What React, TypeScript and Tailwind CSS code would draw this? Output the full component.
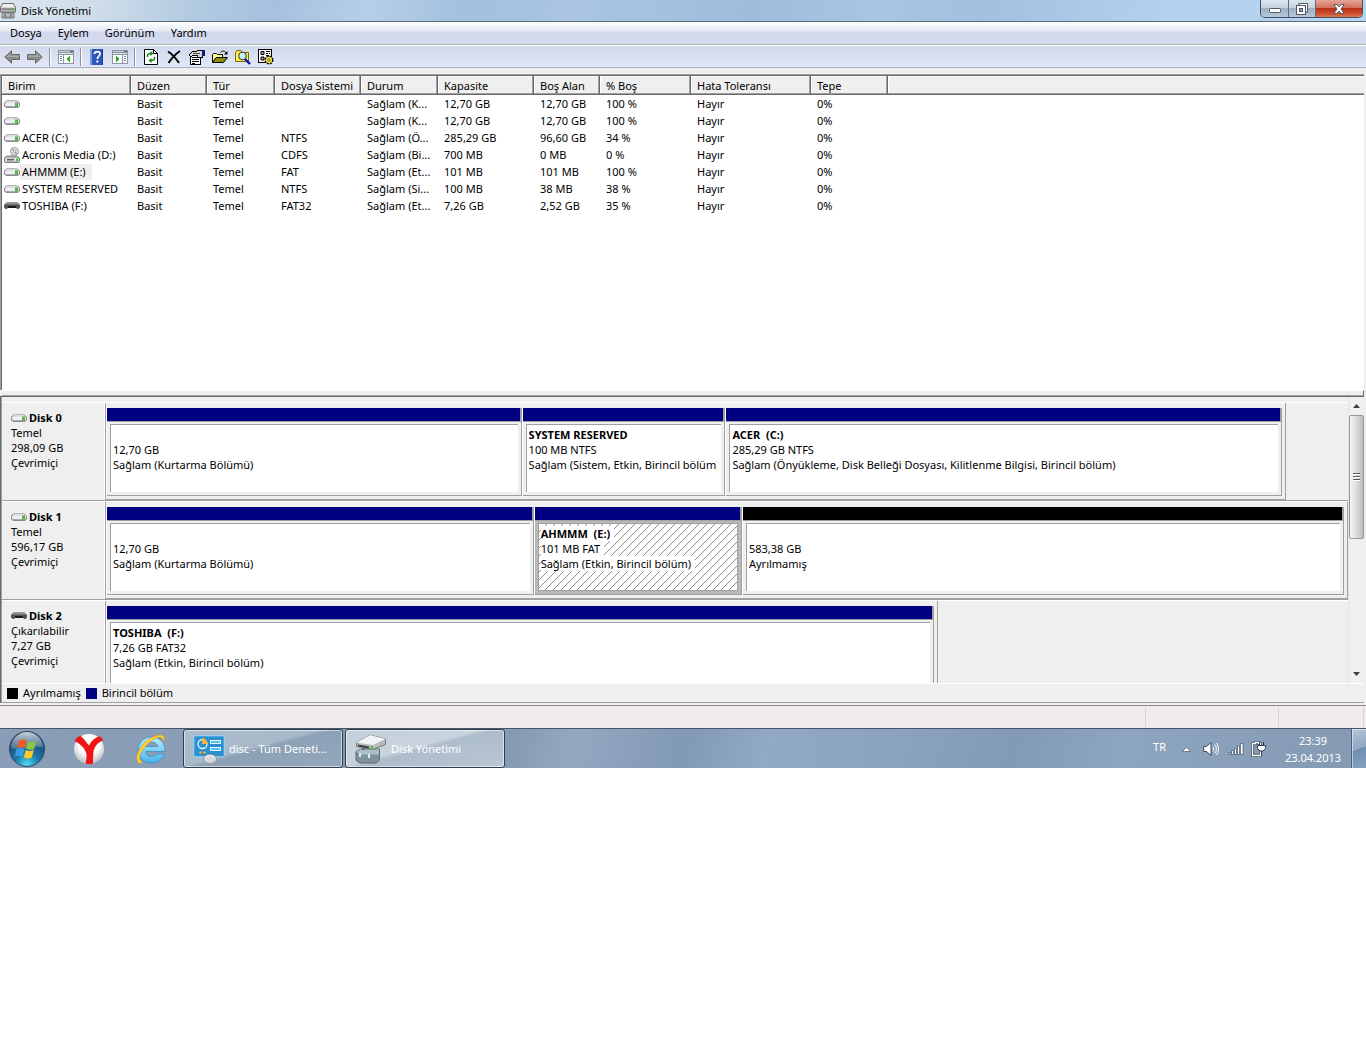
import type { ReactNode } from "react";

type Volume = {
  name: string;
  icon?: "drive" | "cd" | "usb";
  fs: string;
  status: string;
  capacity: string;
  free: string;
  percent: string;
  selected?: boolean;
};

type Partition = {
  name?: string;
  size: string;
  status: string;
  grow: string;
  unallocated?: boolean;
  selected?: boolean;
};

type Disk = {
  name: string;
  kind: string;
  size: string;
  state: string;
  width: string;
  removable?: boolean;
  partitions: Partition[];
};

const columns = [
  { label: "Birim", width: "w-[129px]" },
  { label: "Düzen", width: "w-[76px]" },
  { label: "Tür", width: "w-[68px]" },
  { label: "Dosya Sistemi", width: "w-[86px]" },
  { label: "Durum", width: "w-[77px]" },
  { label: "Kapasite", width: "w-[96px]" },
  { label: "Boş Alan", width: "w-[66px]" },
  { label: "% Boş", width: "w-[91px]" },
  { label: "Hata Toleransı", width: "w-[120px]" },
  { label: "Tepe", width: "w-[77px]" },
];

const volumes: Volume[] = [
  { name: "", fs: "", status: "Sağlam (K...", capacity: "12,70 GB", free: "12,70 GB", percent: "100 %" },
  { name: "", fs: "", status: "Sağlam (K...", capacity: "12,70 GB", free: "12,70 GB", percent: "100 %" },
  { name: "ACER (C:)", fs: "NTFS", status: "Sağlam (Ö...", capacity: "285,29 GB", free: "96,60 GB", percent: "34 %" },
  { name: "Acronis Media (D:)", icon: "cd", fs: "CDFS", status: "Sağlam (Bi...", capacity: "700 MB", free: "0 MB", percent: "0 %" },
  { name: "AHMMM (E:)", fs: "FAT", status: "Sağlam (Et...", capacity: "101 MB", free: "101 MB", percent: "100 %", selected: true },
  { name: "SYSTEM RESERVED", fs: "NTFS", status: "Sağlam (Si...", capacity: "100 MB", free: "38 MB", percent: "38 %" },
  { name: "TOSHIBA (F:)", icon: "usb", fs: "FAT32", status: "Sağlam (Et...", capacity: "7,26 GB", free: "2,52 GB", percent: "35 %" },
];

const disks: Disk[] = [
  {
    name: "Disk 0",
    kind: "Temel",
    size: "298,09 GB",
    state: "Çevrimiçi",
    width: "w-[95%]",
    partitions: [
      { size: "12,70 GB", status: "Sağlam (Kurtarma Bölümü)", grow: "grow-[415]" },
      { name: "SYSTEM RESERVED", size: "100 MB NTFS", status: "Sağlam (Sistem, Etkin, Birincil bölüm)", grow: "grow-[203]" },
      { name: "ACER  (C:)", size: "285,29 GB NTFS", status: "Sağlam (Önyükleme, Disk Belleği Dosyası, Kilitlenme Bilgisi, Birincil bölüm)", grow: "grow-[556]" },
    ],
  },
  {
    name: "Disk 1",
    kind: "Temel",
    size: "596,17 GB",
    state: "Çevrimiçi",
    width: "w-full",
    partitions: [
      { size: "12,70 GB", status: "Sağlam (Kurtarma Bölümü)", grow: "grow-[428]" },
      { name: "AHMMM  (E:)", size: "101 MB FAT", status: "Sağlam (Etkin, Birincil bölüm)", grow: "grow-[208]", selected: true },
      { size: "583,38 GB", status: "Ayrılmamış", grow: "grow-[603]", unallocated: true },
    ],
  },
  {
    name: "Disk 2",
    kind: "Çıkarılabilir",
    size: "7,27 GB",
    state: "Çevrimiçi",
    width: "w-[67%]",
    removable: true,
    partitions: [{ name: "TOSHIBA  (F:)", size: "7,26 GB FAT32", status: "Sağlam (Etkin, Birincil bölüm)", grow: "grow" }],
  },
];

function DriveIcon() {
  return (
    <svg width="16" height="10" viewBox="0 0 16 10" className="shrink-0">
      <path d="M3 1.500h10l2.500 2.500v3l-1.500 1.500H2L.5 7V4z" fill="#a9a9af" stroke="#8b8b90" />
      <path d="M3.200 1.500h9.600L14.500 4h-13z" fill="#dcdce0" />
      <rect x="1" y="3.800" width="14" height="3.200" rx="1.200" fill="#eeeef4" />
      <rect x="11" y="3.500" width="3" height="4" fill="#6f9a6c" />
      <rect x="11" y="4" width="2" height="3" fill="#35d01c" />
    </svg>
  );
}

function UsbIcon() {
  return (
    <svg width="16" height="10" viewBox="0 0 16 10" className="shrink-0">
      <path d="M2.500 1.500h11L16 4v2.500L14.500 8H13l-1-1.500H4L3 8H1.500L0 6.500V4z" fill="#535355" />
      <path d="M2.500 1.500h11l1.500 2H1z" fill="#929295" />
      <path d="M3.500 7l1-2h7l1 2z" fill="#1d1d1f" />
    </svg>
  );
}

function CdIcon() {
  return (
    <svg width="16" height="16" viewBox="0 0 16 16" className="shrink-0">
      <circle cx="10.500" cy="4.500" r="4" fill="#e0e3e5" stroke="#9a9da0" />
      <path d="M10.500 4.500L8 1.500M10.500 4.500l2.500 3" stroke="#7fb58c" strokeWidth="1.300" />
      <circle cx="10.500" cy="4.500" r="1.200" fill="#fff" stroke="#777" strokeWidth=".6" />
      <path d="M2.500 9h10l3 2v3.500a1 1 0 0 1-1 1h-13a1 1 0 0 1-1-1V11z" fill="#b9b9bd" stroke="#808084" />
      <rect x="1.500" y="11.500" width="13" height="2.500" fill="#ececf0" />
      <rect x="3" y="12" width="7" height="1.500" fill="#5f5f63" />
      <rect x="12" y="11.500" width="2" height="2.500" fill="#35d01c" />
    </svg>
  );
}

function AppIcon() {
  return (
    <svg width="16" height="16" viewBox="0 0 16 16" className="shrink-0">
      <path d="M2.500.5h11l2 4v4.500H.5V4.500z" fill="#d2d2d4" stroke="#6c6c6e" />
      <path d="M3 1h10l1.500 3h-13z" fill="#f0f0f1" />
      <path d="M1.500 7.500V5h13v2.500z" fill="#8e8e90" />
      <rect x="12" y="5.500" width="2" height="2" fill="#46c52e" />
      <path d="M2 9.500h12v5.500H2z" fill="#9aa0a2" stroke="#6d7476" />
      <path d="M2.500 12h11" stroke="#d3d8da" />
      <path d="M5 11v2.500M11 11v2.500" stroke="#474c4e" />
    </svg>
  );
}

function ArrowIcon({ flip }: { flip?: boolean }) {
  return (
    <svg width="16" height="16" viewBox="0 0 16 16" className={flip ? "-scale-x-100" : ""}>
      <path d="M.8 8L7.500 1.800v3.700h8v5h-8v3.700z" fill="#8d8d8d" stroke="#686868" strokeLinejoin="round" />
      <path d="M2.500 8L6.500 4.300V6.500h8V8z" fill="#a8a8a8" />
    </svg>
  );
}

function PaneIcon({ flip }: { flip?: boolean }) {
  return (
    <svg width="16" height="14" viewBox="0 0 16 14" shapeRendering="crispEdges">
      <rect width="16" height="14" fill="#8d95a3" />
      <rect x="1" y="1" width="14" height="1" fill="#c9cfda" />
      <rect x="12" y="1" width="3" height="1" fill="#5d6675" />
      <rect x="1" y="3" width="14" height="1" fill="#e2e5ec" />
      <rect x={flip ? 11 : 1} y="5" width="4" height="8" fill="#fff" />
      <rect x={flip ? 1 : 6} y="5" width="9" height="8" fill="#fff" />
      <path d={flip ? "M12 6.500h2M12 8.500h2M12 10.500h2" : "M2 6.500h2M2 8.500h2M2 10.500h2"} stroke="#6c8ac0" />
      <path d={flip ? "M4 6v6l4-3z" : "M12 6v6L8 9z"} fill="#35a52f" />
    </svg>
  );
}

function HelpIcon() {
  return (
    <svg width="13" height="16" viewBox="0 0 13 16">
      <rect width="13" height="16" fill="#2d55ba" />
      <rect width="2" height="16" fill="#7c9ae2" />
      <rect x="12" width="1" height="16" fill="#1c3987" />
      <path d="M4.500 5c0-3.200 5.500-3.200 5.500 0 0 2-2.700 2.200-2.700 5" fill="none" stroke="#fff" strokeWidth="1.700" />
      <rect x="6.300" y="11.500" width="2" height="2" fill="#fff" />
    </svg>
  );
}

function RefreshIcon() {
  return (
    <svg width="14" height="16" viewBox="0 0 14 16">
      <path d="M.5.5h9l4 4v11H.5z" fill="#fff" stroke="#000" />
      <path d="M9.500.5v4h4" fill="none" stroke="#000" />
      <path d="M3.500 8V6.500C3.500 5 5 4.500 7 4.500" fill="none" stroke="#128212" strokeWidth="1.400" />
      <path d="M6.500 2v5L9.500 4.500z" fill="#128212" />
      <path d="M10.500 8v1.500c0 1.500-1.500 2-3.500 2" fill="none" stroke="#128212" strokeWidth="1.400" />
      <path d="M7.500 9v5l-3-2.500z" fill="#128212" />
    </svg>
  );
}

function DeleteIcon() {
  return (
    <svg width="14" height="14" viewBox="0 0 14 14">
      <path d="M1 1.500C5 4 9 8.500 12 13M13 1C8.500 4 4.500 8.500 1.500 13" fill="none" stroke="#000" strokeWidth="1.900" />
    </svg>
  );
}

function PropertiesIcon() {
  return (
    <svg width="16" height="16" viewBox="0 0 16 16" shapeRendering="crispEdges">
      <rect x="1.500" y="5.500" width="10" height="10" fill="#fff" stroke="#000" />
      <path d="M3 8.500h7M3 10.500h7M3 12.500h7M3 14.500h3" stroke="#000" />
      <path d="M0 6l4-4h4l3-1h2v7h-2l-3 1V6H4L2 8z" fill="#d5d5d5" stroke="#000" />
      <path d="M4 4h7v1H4z" fill="#4a4a4a" />
      <rect x="13" y="1" width="3" height="6" fill="#15156e" />
    </svg>
  );
}

function OpenIcon() {
  return (
    <svg width="16" height="14" viewBox="0 0 16 14">
      <path d="M.5 12.500V4.500l1-1h3l1 1h5v3" fill="#ffffa0" stroke="#000" />
      <path d="M.5 12.500L4 7.500h11.500l-4 5z" fill="#8c8b16" stroke="#000" />
      <path d="M8.500 2.500c1.500-2 4-2 5.500.5" fill="none" stroke="#000" />
      <path d="M15.500 1v3.500H12z" fill="#000" />
    </svg>
  );
}

function SearchIcon() {
  return (
    <svg width="16" height="16" viewBox="0 0 16 16">
      <path d="M.5 12.500V3.500l1.500-2h4l1.500 2h6v9z" fill="#ffef3e" stroke="#6d6a12" />
      <circle cx="7.500" cy="7" r="3.800" fill="#bdf2f5" stroke="#333" />
      <path d="M5.500 7c0-1.500 1-2 2-2" fill="none" stroke="#fff" />
      <path d="M10 10l5 5" stroke="#1313a6" strokeWidth="2.400" />
    </svg>
  );
}

function SettingsIcon() {
  return (
    <svg width="16" height="16" viewBox="0 0 16 16">
      <rect x=".5" y=".5" width="13" height="13" fill="#fff" stroke="#000" />
      <path d="M3 2.500h3v3H3zM3 8h3v3H3z" fill="#9a9a9a" stroke="#000" />
      <path d="M8 2.500h4M8 4.500h2M11 4.500h1M8 6.500h3" stroke="#000" />
      <circle cx="11" cy="11" r="3.800" fill="#f4e43b" stroke="#000" strokeDasharray="2 1" strokeWidth="1.400" />
      <circle cx="11" cy="11" r="1.200" fill="#fff" stroke="#77701a" />
    </svg>
  );
}

function ToolButton({ label, children }: { label: string; children: ReactNode }) {
  return (
    <button type="button" aria-label={label} className="flex h-5 w-[23px] items-center justify-center">
      {children}
    </button>
  );
}

function Separator() {
  return <div className="mx-[3px] h-[18px] w-[2px] border-l border-[#8c8f9b] bg-white" />;
}

function TitleBar() {
  return (
    <header className="flex h-[22px] items-start justify-between border-b border-[#5b6b7c] bg-[linear-gradient(100deg,#dbe5ee_0%,#cfdde9_7%,#b3cbe1_14%,#a5c1de_20%,#b4cfe8_27%,#a3c0dd_34%,#a9c5e1_42%,#9fbddb_55%,#a8c5e1_64%,#a3c1df_72%,#b3d1ec_85%,#b7d5f0_100%)]">
      <div className="flex h-[21px] items-center gap-[5px]">
        <AppIcon />
        <h1>Disk Yönetimi</h1>
      </div>
      <div className="mr-[3px] flex h-[18px] overflow-hidden rounded-b-[5px] border border-t-0 border-[#3f5063]">
        <button type="button" aria-label="Simge durumuna küçült" className="flex w-7 items-end justify-center border-r border-[#5e6f82] bg-[linear-gradient(#dce6ef_0%,#c4d1de_45%,#9eafc0_50%,#b6c8da_100%)] pb-[4px]">
          <svg width="12" height="5" viewBox="0 0 12 5">
            <rect x=".5" y=".5" width="11" height="4" rx="1" fill="#fff" stroke="#535666" />
          </svg>
        </button>
        <button type="button" aria-label="Önceki boyut" className="flex w-[27px] items-center justify-center border-r border-[#5e6f82] bg-[linear-gradient(#dce6ef_0%,#c4d1de_45%,#9eafc0_50%,#b6c8da_100%)]">
          <svg width="12" height="12" viewBox="0 0 12 12">
            <rect x="3" y=".5" width="8.500" height="8.500" fill="#fff" stroke="#535666" />
            <rect x=".5" y="2.500" width="9" height="9" fill="#fff" stroke="#535666" />
            <rect x="3.500" y="5.500" width="3" height="3" fill="#8e9eae" stroke="#535666" />
          </svg>
        </button>
        <button type="button" aria-label="Kapat" className="flex w-[46px] items-center justify-center bg-[linear-gradient(#e6a598_0%,#d3705c_45%,#b8321a_50%,#cf4d2b_80%,#dd7a55_100%)]">
          <svg width="12" height="10" viewBox="0 0 12 10">
            <path d="M.8.5h3L6 2.800 8.200.5h3L8 5l3.200 4.500h-3L6 7.200 3.800 9.500h-3L4 5z" fill="#fff" stroke="#535666" />
          </svg>
        </button>
      </div>
    </header>
  );
}

function MenuBar() {
  return (
    <nav className="flex h-[23px] items-center border-b border-[#b1b3b9] bg-[linear-gradient(#ffffff_0px,#e5eaf5_9px,#d4daed_10px)] pl-[2px]">
      {["Dosya", "Eylem", "Görünüm", "Yardım"].map((item) => (
        <button key={item} type="button" className="px-2">
          {item}
        </button>
      ))}
    </nav>
  );
}

function Toolbar() {
  return (
    <div className="flex h-[23px] items-center border-t border-b border-t-white border-b-[#a9b0c5] bg-linear-to-b from-[#d3d9ec] to-[#e0e7f7]">
      <ToolButton label="Geri"><ArrowIcon /></ToolButton>
      <ToolButton label="İleri"><ArrowIcon flip /></ToolButton>
      <Separator />
      <ToolButton label="Konsol ağacı"><PaneIcon /></ToolButton>
      <Separator />
      <ToolButton label="Yardım"><HelpIcon /></ToolButton>
      <ToolButton label="Eylem bölmesi"><PaneIcon flip /></ToolButton>
      <Separator />
      <ToolButton label="Yenile"><RefreshIcon /></ToolButton>
      <ToolButton label="Sil"><DeleteIcon /></ToolButton>
      <ToolButton label="Özellikler"><PropertiesIcon /></ToolButton>
      <ToolButton label="Aç"><OpenIcon /></ToolButton>
      <ToolButton label="Ara"><SearchIcon /></ToolButton>
      <ToolButton label="Ayarlar"><SettingsIcon /></ToolButton>
    </div>
  );
}

function VolumeTable() {
  return (
    <div className="min-h-[314px] bg-white">
      <table className="w-full table-fixed border-collapse text-left">
        <thead>
          <tr className="h-[19px] bg-[#efefef]">
            {columns.map((col) => (
              <th
                key={col.label}
                className={`${col.width} p-0 pl-[6px] font-normal whitespace-nowrap shadow-[inset_-1px_-1px_0_#696969,inset_-2px_-2px_0_#a0a0a0,inset_1px_1px_0_#fff]`}
              >
                {col.label}
              </th>
            ))}
            <th aria-label="Boş" className="p-0 shadow-[inset_0_-1px_0_#696969,inset_0_-2px_0_#a0a0a0,inset_1px_1px_0_#fff]" />
          </tr>
        </thead>
        <tbody>
          {volumes.map((v, i) => (
            <tr key={i} className="h-[17px] whitespace-nowrap">
              <td className="p-0">
                <div className="flex h-[17px] items-center pl-[2px]">
                  {v.icon === "cd" ? <CdIcon /> : v.icon === "usb" ? <UsbIcon /> : <DriveIcon />}
                  <span className={v.selected ? "bg-[#f0eded] pr-[6px] pl-[2px]" : "pl-[2px]"}>{v.name}</span>
                </div>
              </td>
              {["Basit", "Temel", v.fs, v.status, v.capacity, v.free, v.percent, "Hayır", "0%"].map((cell, j) => (
                <td key={j} className="p-0 pl-[6px]">{cell}</td>
              ))}
              <td />
            </tr>
          ))}
        </tbody>
      </table>
    </div>
  );
}

function PartitionBox({ part }: { part: Partition }) {
  const lineBg = part.selected ? "bg-white pr-1" : "";
  return (
    <div className={`flex min-w-0 basis-0 flex-col border-l border-white ${part.grow}`}>
      <div className={`h-[13px] border-r-2 border-[#a0a0a0] ${part.unallocated ? "bg-black" : "bg-[#000080]"}`} />
      <div
        className={`flex h-[75px] border-t border-r border-b border-[#a0a0a0] ${
          part.selected ? "bg-[#b9b9b9] p-[3px] pt-[2px]" : "bg-[#efefef] px-[3px] pt-[2px] pb-[3px]"
        }`}
      >
        <div
          className={`min-w-0 flex-1 overflow-hidden border-t border-l border-[#a0a0a0] bg-white pt-[2px] pr-1 pl-[2px] leading-[15px] whitespace-pre ${
            part.selected ? "border-r border-b bg-[linear-gradient(135deg,transparent_45%,#8c8c8c_45%,#8c8c8c_55%,transparent_55%)] bg-size-[8px_8px]" : ""
          }`}
        >
          <div className="h-[15px] overflow-hidden font-bold"><span className={lineBg}>{part.name}</span></div>
          <div className="h-[15px] overflow-hidden"><span className={lineBg}>{part.size}</span></div>
          <div className="h-[15px] overflow-hidden"><span className={lineBg}>{part.status}</span></div>
        </div>
      </div>
    </div>
  );
}

function DiskRow({ disk }: { disk: Disk }) {
  return (
    <div className="flex h-[99px] shrink-0 border-t border-b border-t-white border-b-[#a0a0a0]">
      <div className="w-[103px] shrink-0 border-r border-white pt-[7px] pl-[9px] leading-[15px]">
        <div className="flex items-center gap-[2px] font-bold">
          {disk.removable ? <UsbIcon /> : <DriveIcon />}
          <span>{disk.name}</span>
        </div>
        <div>{disk.kind}</div>
        <div>{disk.size}</div>
        <div>{disk.state}</div>
      </div>
      <div className="min-w-0 flex-1">
        <div className={`flex h-[97px] border-r border-b border-l border-[#a0a0a0] pt-[5px] pr-[3px] ${disk.width}`}>
          {disk.partitions.map((part) => (
            <PartitionBox key={part.size} part={part} />
          ))}
        </div>
      </div>
    </div>
  );
}

function ScrollBar() {
  return (
    <div className="flex w-[16px] shrink-0 flex-col border-l border-[#e3e3e3] bg-[#f0f0f0]">
      <button type="button" aria-label="Yukarı kaydır" className="flex h-[18px] items-center justify-center">
        <svg width="7" height="4" viewBox="0 0 7 4"><path d="M0 4l3.500-4L7 4z" fill="#404040" /></svg>
      </button>
      <div className="flex h-[124px] flex-col items-center justify-center gap-px rounded-[2px] border border-[#979797] bg-linear-to-r from-[#f5f5f5] via-[#dcdcde] to-[#bcbcc0]">
        <i className="h-[2px] w-[7px] border-b border-white bg-[#5a5a5a]" />
        <i className="h-[2px] w-[7px] border-b border-white bg-[#5a5a5a]" />
        <i className="h-[2px] w-[7px] border-b border-white bg-[#5a5a5a]" />
      </div>
      <button type="button" aria-label="Aşağı kaydır" className="mt-auto flex h-[18px] items-center justify-center">
        <svg width="7" height="4" viewBox="0 0 7 4"><path d="M0 0l3.500 4L7 0z" fill="#404040" /></svg>
      </button>
    </div>
  );
}

function Legend() {
  return (
    <div className="flex h-[20px] items-center border-t border-b border-t-white border-b-[#a0a0a0] pl-[5px]">
      <i className="mr-[5px] size-[11px] bg-black" />
      <span className="mr-[5px]">Ayrılmamış</span>
      <i className="mr-[5px] size-[11px] bg-[#000080]" />
      <span>Birincil bölüm</span>
    </div>
  );
}

function StartOrb() {
  return (
    <svg width="38" height="38" viewBox="0 0 38 38">
      <defs>
        <radialGradient id="orb" cx="50%" cy="95%" r="85%">
          <stop offset="0" stopColor="#4fe0f5" />
          <stop offset=".4" stopColor="#1c78a8" />
          <stop offset="1" stopColor="#1d3f66" />
        </radialGradient>
        <linearGradient id="gloss" x1="0" y1="0" x2="0" y2="1">
          <stop offset="0" stopColor="#fff" stopOpacity=".75" />
          <stop offset="1" stopColor="#fff" stopOpacity=".15" />
        </linearGradient>
      </defs>
      <circle cx="19" cy="19" r="17.500" fill="url(#orb)" stroke="#2b4963" />
      <path d="M3 18a16 16 0 0 1 32 0c-8-4-24 4-32 0z" fill="url(#gloss)" />
      <path d="M11 10.500c3-1.600 5.500-1.300 7.800.2l-2 7.500c-2.500-1.400-5-1.500-7.800-.3z" fill="#ee5a24" />
      <path d="M20 11.300c2.800 1.400 5.500 1.300 8.200 0l-2.100 7.600c-2.700 1.300-5.300 1.200-8-.2z" fill="#8cc63e" />
      <path d="M8.600 19.200c2.800-1.200 5.300-1.100 7.900.3l-2 7.500c-2.500-1.400-5-1.500-7.900-.3z" fill="#3a9ce0" />
      <path d="M17.800 20c2.700 1.300 5.300 1.300 8 .1l-2.100 7.500c-2.700 1.200-5.300 1.200-8-.1z" fill="#fcc926" />
    </svg>
  );
}

function YandexIcon() {
  return (
    <svg width="32" height="32" viewBox="0 0 32 32">
      <defs>
        <radialGradient id="ball" cx="50%" cy="35%" r="65%">
          <stop offset=".5" stopColor="#fff" />
          <stop offset="1" stopColor="#b9bdc2" />
        </radialGradient>
      </defs>
      <circle cx="16" cy="16" r="15" fill="url(#ball)" />
      <path d="M1.500 8C3 5 5 3.500 7.500 3c3 2 5.500 6 8.500 9.500C18.500 8 22 4 27 3.500c1.500 1 2.500 2.500 3 4-5 1.500-8.500 6-9.500 11-.5 4-.5 8-.5 12-2 .7-5 .8-7.500 0 1-4 1.500-8 .5-11C11 14 6.500 10.500 1.500 8z" fill="#f01414" />
    </svg>
  );
}

function ExplorerIcon() {
  return (
    <svg width="32" height="32" viewBox="0 0 32 32">
      <defs>
        <linearGradient id="ie" x1="0" y1="0" x2="0" y2="1">
          <stop offset="0" stopColor="#b4eefd" />
          <stop offset="1" stopColor="#45b4ea" />
        </linearGradient>
      </defs>
      <path d="M30 18.500H11c.2 3 2.300 5 5.500 5 2.300 0 4-.9 5-2.500h8C27.500 26 23 30 16.500 30 8.500 30 3 25 3 17.500S8.700 4 16.500 4 30.500 9.500 30 18.500zM22.800 13.500c-.4-2.700-2.900-4.300-6.100-4.300-3.100 0-5.300 1.600-5.900 4.300z" fill="url(#ie)" stroke="#3c86b8" strokeWidth=".7" />
      <path d="M4.500 30.500C-1 27.500 2 16 11.500 8 19.500 1 29 0 29.500 5c.2 1.500-.2 3-1 4.500C28.500 6 27 3.500 23 4.500 16 6.500 8 14.500 5.500 21c-1.700 4.500-1 7 2 7.500-1 1.300-2 2-3 2z" fill="#fdd23a" stroke="#c68c12" strokeWidth=".5" />
    </svg>
  );
}

function ControlPanelIcon() {
  return (
    <svg width="32" height="30" viewBox="0 0 32 30">
      <rect x=".8" y="1.800" width="30.400" height="21" rx="1.500" fill="#2b8fd0" stroke="#9edcf7" />
      <circle cx="9.500" cy="10" r="4.500" fill="none" stroke="#e8f6fd" strokeWidth="1.300" />
      <path d="M9 10V4a6 6 0 0 1 5.500 6z" fill="#fbb03b" />
      <circle cx="7.500" cy="18.500" r="1.200" fill="#fbb03b" />
      <circle cx="11.500" cy="18.500" r="1.200" fill="#fbb03b" />
      <rect x="17.500" y="6.500" width="10" height="3" fill="#4dc4f5" stroke="#e8f6fd" />
      <rect x="17.500" y="13.500" width="10" height="3" fill="#4dc4f5" stroke="#e8f6fd" />
      <ellipse cx="17" cy="25" rx="6.500" ry="4.500" fill="#d4d8dc" stroke="#93999f" />
      <path d="M12 23.500c2-2.500 8-2.500 10 0" stroke="#fff" fill="none" />
    </svg>
  );
}

function DiskToolIcon() {
  return (
    <svg width="32" height="30" viewBox="0 0 32 30">
      <path d="M1 17.500l5-2.500h18.500v11L21 29H5l-4-2.500z" fill="#7d9299" stroke="#5a6b71" />
      <path d="M1.500 17.500l4.500-2h18v5H5z" fill="#aebfc5" />
      <path d="M8.500 16v-3h9v3" fill="none" stroke="#404a4e" strokeWidth="1.500" />
      <path d="M5 19v4M14 20v4" stroke="#e5ecee" strokeWidth="2" />
      <path d="M1.500 8.500L15 1l15.500 4v5.500L18 15.500 1.500 12.500z" fill="#b8bbbe" stroke="#77797b" />
      <path d="M1.500 8.500L15 1l15.500 4L18 11z" fill="#f2f3f4" />
      <path d="M3 10.500l11 2v2L3 12.500z" fill="#3f4245" />
      <path d="M16 12l2-.3v3.300l-2-.3z" fill="#3fcb28" />
    </svg>
  );
}

function TaskButton({ icon, label, active }: { icon: ReactNode; label: string; active?: boolean }) {
  return (
    <button
      type="button"
      className={`flex h-[39px] w-[160px] items-center gap-[4px] rounded-[3px] border border-[#2f3f50] pl-[9px] text-white shadow-[inset_0_0_0_1px_rgba(255,255,255,0.55)] ${
        active
          ? "bg-[linear-gradient(165deg,#c3cfda_0%,#c9d3dd_45%,#adbccb_50%,#bac7d4_100%)]"
          : "bg-[linear-gradient(165deg,#abbccd_0%,#a8b9ca_45%,#8da1b6_50%,#93a8bd_100%)]"
      }`}
    >
      {icon}
      <span className="whitespace-nowrap">{label}</span>
    </button>
  );
}

function TaskBar() {
  return (
    <footer className="flex h-10 items-center border-t border-[#46566a] bg-[linear-gradient(105deg,#8a9fb7_0%,#879cb4_38%,#93a9c2_42%,#8299b3_50%,#91a9c3_56%,#8aa2bc_66%,#829ab5_74%,#8da5bf_82%,#8499b2_100%)]">
      <button type="button" aria-label="Başlat" className="ml-2"><StartOrb /></button>
      <button type="button" aria-label="Yandex" className="ml-[27px]"><YandexIcon /></button>
      <button type="button" aria-label="Internet Explorer" className="mr-4 ml-[30px]"><ExplorerIcon /></button>
      <div className="flex gap-[2px]">
        <TaskButton icon={<ControlPanelIcon />} label="disc - Tüm Deneti..." />
        <TaskButton icon={<DiskToolIcon />} label="Disk Yönetimi" active />
      </div>
      <div className="ml-auto flex items-center text-white">
        <span className="mr-4 mb-1">TR</span>
        <svg width="9" height="6" viewBox="0 0 9 6" className="mr-3">
          <path d="M.5 5.500l4-4.500 4 4.500z" fill="#fff" stroke="#4a5b6d" strokeWidth=".7" />
        </svg>
        <svg width="16" height="16" viewBox="0 0 16 16" className="mr-[9px]">
          <path d="M.7 5.500h2.800L8 1.500v13L3.500 10.500H.7z" fill="#fff" stroke="#3c4b5c" />
          <path d="M9.800 5.500c1 1.500 1 3.500 0 5M11.800 3.500c2 2.700 2 6.300 0 9M13.500 2c2.500 3.500 2.500 8.500 0 12" fill="none" stroke="#fff" />
        </svg>
        <svg width="16" height="12" viewBox="0 0 16 12" className="mr-[7px]">
          <path d="M.5 9.500h2v2h-2zM3.500 7.500h2v4h-2zM6.500 5.500h2v6h-2zM9.500 3h2v8.500h-2zM12.500.5h2.500v11h-2.500z" fill="#fff" stroke="#45556a" strokeWidth=".7" />
        </svg>
        <svg width="16" height="16" viewBox="0 0 16 16" className="mr-[16px]">
          <path d="M2.500 2.500h2v-1h3v1h2v12h-8v-12z" fill="#8398ad" stroke="#303d4b" strokeWidth="2.500" />
          <path d="M2.500 2.500h2v-1h3v1h2v12h-8v-12z" fill="none" stroke="#fff" strokeWidth="1.300" />
          <path d="M8.500 1v3M12.500 1v3M6.500 4.500h8v3l-2.500 2.500H9L6.500 7.500zM10.500 10v5" fill="#fff" stroke="#303d4b" />
        </svg>
        <div className="mr-2 w-[60px] text-center leading-[17px]">
          <div>23:39</div>
          <div>23.04.2013</div>
        </div>
        <button type="button" aria-label="Masaüstünü göster" className="h-[39px] w-[15px] border-l border-[#4b6079] bg-[linear-gradient(160deg,#b4c5d8_0%,#8fa7c2_50%,#6d8cb0_52%,#87a3c2_100%)] shadow-[inset_1px_1px_0_rgba(255,255,255,0.5)]" />
      </div>
    </footer>
  );
}

export default function App() {
  return (
    <div className="bg-white font-['Noto_Sans','Open_Sans',sans-serif] text-[11px] leading-[16px] text-black">
      <TitleBar />
      <MenuBar />
      <Toolbar />
      <main className="bg-[#efefef] pt-[6px] pr-[2px] pb-[2px]">
        <div className="border-t border-l border-[#a0a0a0]">
          <div className="border-t border-l border-[#696969]">
            <VolumeTable />
          </div>
        </div>
        <div className="ml-[2px] h-[6px] border-t border-r border-b border-t-white border-r-[#696969] border-b-[#a0a0a0]" />
        <div className="border-t border-l border-[#696969]">
          <div className="border-l border-[#a0a0a0]">
            <div className="flex h-[286px] overflow-hidden">
              <div className="flex min-w-0 flex-1 flex-col pt-[5px]">
                {disks.map((disk) => (
                  <DiskRow key={disk.name} disk={disk} />
                ))}
              </div>
              <ScrollBar />
            </div>
            <Legend />
          </div>
        </div>
      </main>
      <div className="flex h-[23px] justify-end border-t border-[#8c8c8c] bg-[#f1edec] py-px">
        <div className="w-[133px] border-l border-[#d6d3d2]" />
        <div className="mr-[2px] w-[86px] border-x border-[#d6d3d2]" />
      </div>
      <TaskBar />
    </div>
  );
}
